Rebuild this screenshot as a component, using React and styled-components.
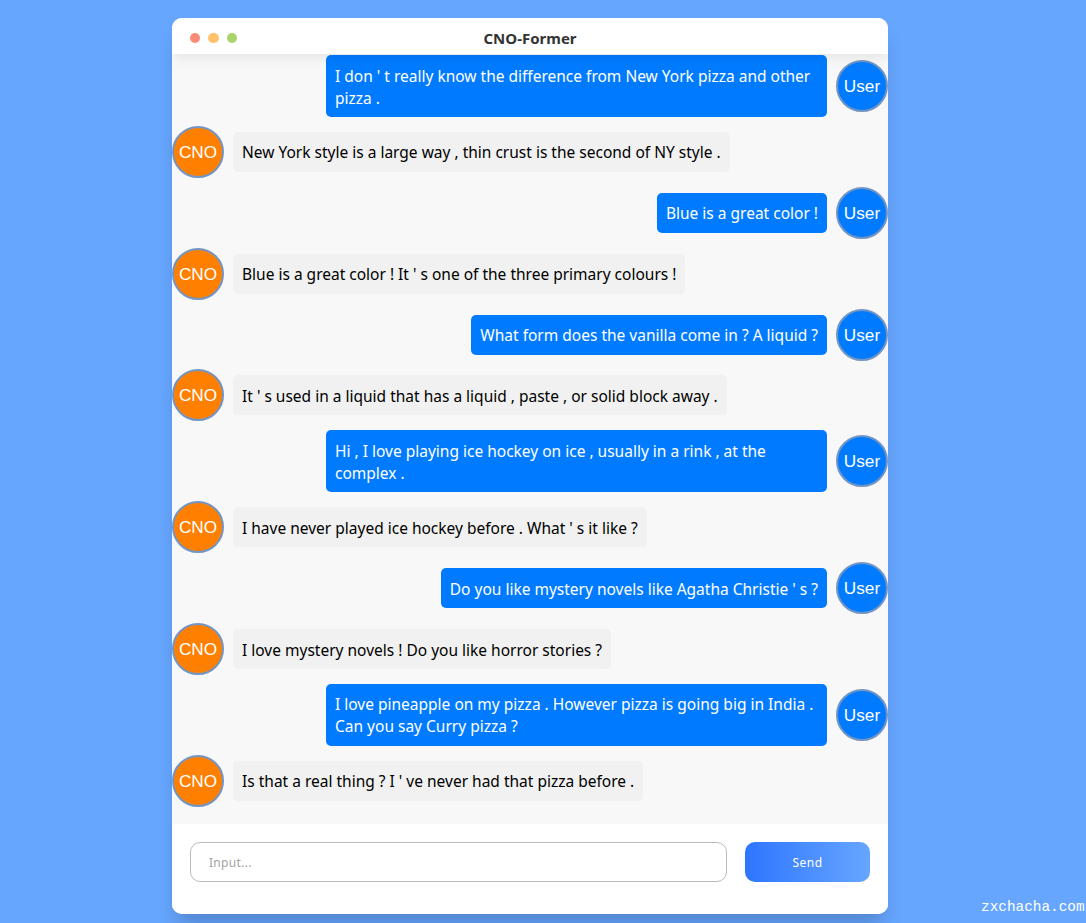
import React from 'react'
import styled, { createGlobalStyle } from 'styled-components'

const GlobalStyle = createGlobalStyle`
  html, body {
    margin: 0;
    height: 100%;
    overflow: hidden;
    background: #66a6ff;
  }
`

const Page = styled.div`
  height: 923px;
  padding: 18px 0 0 172px;
  box-sizing: border-box;
`

const Chat = styled.div`
  width: 716px;
  height: 896px;
  display: flex;
  flex-direction: column;
  background: #fff;
  border-radius: 10px;
  overflow: hidden;
  box-shadow: 0 15px 20px -5px rgba(0, 0, 0, 0.2);
`

const Header = styled.header`
  height: 36px;
  flex: none;
  position: relative;
  z-index: 1;
  display: flex;
  align-items: center;
  justify-content: center;
  padding-top: 3px;
  box-sizing: border-box;
  background: #fff;
  box-shadow: 0 2px 14px rgba(0, 0, 0, 0.1);
  font: 700 15px "Noto Sans", sans-serif;
  color: #333;
`

const Dots = styled.div`
  position: absolute;
  left: 18px;
  top: 15px;
  display: flex;
  gap: 8px;
`

const Dot = styled.span`
  width: 10.4px;
  height: 10.4px;
  border-radius: 50%;
  background: ${p => p.color};
`

const Messages = styled.main`
  flex: 1;
  display: flex;
  flex-direction: column;
  gap: 8.9px;
  padding-top: 1px;
  background: #f8f8f8;
  overflow: hidden;
`

const Row = styled.div`
  display: flex;
  align-items: center;
  gap: 9px;
  justify-content: ${p => (p.$user ? 'flex-end' : 'flex-start')};
`

const Avatar = styled.div`
  width: 52px;
  height: 52px;
  flex: none;
  box-sizing: border-box;
  display: flex;
  align-items: center;
  justify-content: center;
  padding-top: 1px;
  border-radius: 50%;
  border: 2px solid #7395c4;
  background: ${p => (p.$user ? '#007bff' : '#ff8000')};
  color: #fff;
  font: 17.2px "Liberation Sans", Arial, sans-serif;
`

const Bubble = styled.div`
  max-width: 501px;
  box-sizing: border-box;
  padding: 9.5px 9px 8.5px;
  border-radius: 5px;
  font: 15.5px/22px "Noto Sans", sans-serif;
  background: ${p => (p.$user ? '#007bff' : '#f1f1f1')};
  color: ${p => (p.$user ? '#fff' : '#000')};
`

const Footer = styled.footer`
  height: 90px;
  flex: none;
  box-sizing: border-box;
  display: flex;
  gap: 18px;
  padding: 18px;
  background: #fff;
`

const Input = styled.input`
  width: 537px;
  height: 40px;
  box-sizing: border-box;
  padding: 0 18px;
  border: 1px solid #bbb;
  border-radius: 10px;
  outline: none;
  font: 12px "Noto Sans", sans-serif;
  letter-spacing: 0.3px;
  &::placeholder {
    color: #a3a3a8;
  }
`

const SendButton = styled.button`
  width: 125px;
  height: 40px;
  border: 0;
  border-radius: 10px;
  color: #fff;
  font: 12px "Noto Sans", sans-serif;
  letter-spacing: 0.5px;
  background: linear-gradient(to right, #2e75ff, #66a6ff);
`

const Watermark = styled.div`
  position: absolute;
  left: 981px;
  top: 899px;
  color: #fff;
  white-space: nowrap;
  font: 14.4px "Liberation Mono", monospace;
`

const messages = [
  ['user', "I don ' t really know the difference from New York pizza and other pizza ."],
  ['cno', 'New York style is a large way , thin crust is the second of NY style .'],
  ['user', 'Blue is a great color !'],
  ['cno', "Blue is a great color ! It ' s one of the three primary colours !"],
  ['user', 'What form does the vanilla come in ? A liquid ?'],
  ['cno', "It ' s used in a liquid that has a liquid , paste , or solid block away ."],
  ['user', 'Hi , I love playing ice hockey on ice , usually in a rink , at the complex .'],
  ['cno', "I have never played ice hockey before . What ' s it like ?"],
  ['user', "Do you like mystery novels like Agatha Christie ' s ?"],
  ['cno', 'I love mystery novels ! Do you like horror stories ?'],
  ['user', 'I love pineapple on my pizza . However pizza is going big in India . Can you say Curry pizza ?'],
  ['cno', "Is that a real thing ? I ' ve never had that pizza before ."],
]

const App = () => (
  <Page>
    <GlobalStyle />
    <Chat>
      <Header>
        <Dots>
          <Dot color="#f98a73" />
          <Dot color="#ffc26a" />
          <Dot color="#a9d46a" />
        </Dots>
        CNO-Former
      </Header>
      <Messages>
        {messages.map(([who, text], i) => {
          const isUser = who === 'user'
          return (
            <Row key={i} $user={isUser}>
              {!isUser && <Avatar>CNO</Avatar>}
              <Bubble $user={isUser}>{text}</Bubble>
              {isUser && <Avatar $user>User</Avatar>}
            </Row>
          )
        })}
      </Messages>
      <Footer>
        <Input placeholder="Input..." />
        <SendButton>Send</SendButton>
      </Footer>
    </Chat>
    <Watermark>zxchacha.com</Watermark>
  </Page>
)

export default App
